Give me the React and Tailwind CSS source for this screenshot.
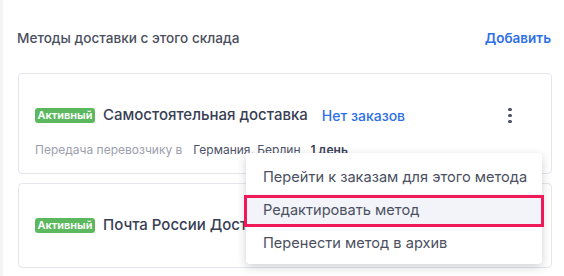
import React from "react";

const methods = [
  {
    id: 1,
    name: "Самостоятельная доставка",
    orders: "Нет заказов",
    city: "Германия, Берлин",
    days: "1 день",
  },
  { id: 2, name: "Почта России Доставка" },
];

const Kebab = () => (
  <div className="flex flex-col items-center gap-[2.5px] w-[6px]">
    <span className="w-[3.5px] h-[3.5px] rounded-full bg-[#4a5068]" />
    <span className="w-[3.5px] h-[3.5px] rounded-full bg-[#4a5068]" />
    <span className="w-[3.5px] h-[3.5px] rounded-full bg-[#4a5068]" />
  </div>
);

const Badge = () => (
  <span className="h-[15px] w-[60px] flex items-center justify-center rounded-[3px] bg-[#5cb85f] text-white text-[11px] font-semibold leading-none">
    Активный
  </span>
);

const App = () => {
  const menu = [
    "Перейти к заказам для этого метода",
    "Редактировать метод",
    "Перенести метод в архив",
  ];

  return (
    <div
      className="relative w-[564px] h-[276px] overflow-hidden bg-white flex"
      style={{ fontFamily: "Inter, 'Noto Sans', sans-serif" }}
    >
      <div className="w-[3px] shrink-0 bg-[#f3f4f8]" />
      <div className="flex-1 pl-[15px] pr-[12px] flex flex-col">
        <div className="h-[18px] mt-[29px] flex items-center justify-between">
          <span className="text-[13.6px] font-medium text-[#4a4f5e] -ml-[1px]">
            Методы доставки с этого склада
          </span>
          <span className="text-[13.5px] font-semibold text-[#2f6fe6] mr-[1px]">
            Добавить
          </span>
        </div>

        <div className="mt-[26px] flex flex-col gap-[9px]">
          {/* card 1 */}
          <div className="h-[101px] border border-[#e4e6ec] rounded-[4px] pl-[16px] pr-[38px] pt-[34px]">
            <div className="flex items-center h-[15px]">
              <Badge />
              <span className="ml-[8px] text-[15px] font-medium text-[#383e54]">
                {methods[0].name}
              </span>
              <span className="ml-[14px] text-[14px] font-medium text-[#2f6fe6]">
                {methods[0].orders}
              </span>
              <div className="ml-auto">
                <Kebab />
              </div>
            </div>
            <div className="mt-[19px] flex items-center text-[12px] leading-[16px]">
              <span className="text-[#9ba0ac]">Передача перевозчику в</span>
              <span className="ml-[11px] text-[#4d5366]">{methods[0].city}</span>
              <span className="ml-[10px] font-semibold text-[#3b4157]">
                {methods[0].days}
              </span>
            </div>
          </div>

          {/* card 2 */}
          <div className="h-[85px] border border-[#e4e6ec] rounded-[4px] pl-[16px] pr-[38px] flex items-center">
            <Badge />
            <span className="ml-[8px] text-[15px] font-medium text-[#383e54]">
              {methods[1].name}
            </span>
            <div className="ml-auto">
              <Kebab />
            </div>
          </div>
        </div>
      </div>

      {/* dropdown */}
      <div className="absolute left-[246px] top-[153px] w-[296px] h-[111px] bg-white rounded-[4px] shadow-[0_3px_10px_rgba(40,45,70,0.22)] pt-[8px]">
        {menu.map((item, i) => (
          <div
            key={item}
            className={`relative h-[33px] flex items-center pl-[17px] text-[14.6px] text-[#4b5060] ${
              i === 1 ? "bg-[#f3f4f9]" : ""
            }`}
          >
            {item}
            {i === 1 && (
              <span className="absolute -left-[2px] -right-[2px] top-[1px] bottom-0 border-[3px] border-[#f0195a]" />
            )}
          </div>
        ))}
      </div>
    </div>
  );
};

export default App;
